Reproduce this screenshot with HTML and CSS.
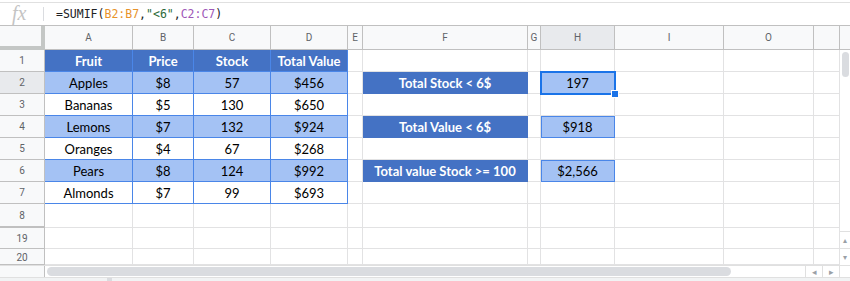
FILE: index.html
```html
<!DOCTYPE html>
<html lang="en">
<head>
    <meta charset="UTF-8">
    <title>SUMIF - Sheet</title>
    <link rel="stylesheet" href="styles.css">
</head>
<body>
    <!-- Formula bar -->
    <div class="formula-bar">
        <span class="fx">fx</span>
        <span class="formula">=SUMIF(<span class="ref-b">B2:B7</span>,<span class="str">"&lt;6"</span>,<span class="ref-c">C2:C7</span>)</span>
    </div>

    <div class="sheet">
        <div class="grid">
            <div class="row head-row">
                <div class="corner"></div>
                <div class="col-h">A</div>
                <div class="col-h">B</div>
                <div class="col-h">C</div>
                <div class="col-h">D</div>
                <div class="col-h">E</div>
                <div class="col-h">F</div>
                <div class="col-h">G</div>
                <div class="col-h active">H</div>
                <div class="col-h">I</div>
                <div class="col-h">O</div>
                <div class="col-h"></div>
            </div>
            <div class="row">
                <div class="row-h">1</div>
                <div class="cell t-head">Fruit</div>
                <div class="cell t-head">Price</div>
                <div class="cell t-head">Stock</div>
                <div class="cell t-head">Total Value</div>
                <div class="cell"></div><div class="cell"></div><div class="cell"></div><div class="cell"></div>
                <div class="cell"></div><div class="cell"></div><div class="cell"></div>
            </div>
            <div class="row">
                <div class="row-h active">2</div>
                <div class="cell t-cell alt">Apples</div>
                <div class="cell t-cell alt">$8</div>
                <div class="cell t-cell alt">57</div>
                <div class="cell t-cell alt">$456</div>
                <div class="cell"></div>
                <div class="cell label">Total Stock &lt; 6$</div>
                <div class="cell"></div>
                <div class="cell result selected">197</div>
                <div class="cell"></div><div class="cell"></div><div class="cell"></div>
            </div>
            <div class="row">
                <div class="row-h">3</div>
                <div class="cell t-cell">Bananas</div>
                <div class="cell t-cell">$5</div>
                <div class="cell t-cell">130</div>
                <div class="cell t-cell">$650</div>
                <div class="cell"></div><div class="cell"></div><div class="cell"></div><div class="cell"></div>
                <div class="cell"></div><div class="cell"></div><div class="cell"></div>
            </div>
            <div class="row">
                <div class="row-h">4</div>
                <div class="cell t-cell alt">Lemons</div>
                <div class="cell t-cell alt">$7</div>
                <div class="cell t-cell alt">132</div>
                <div class="cell t-cell alt">$924</div>
                <div class="cell"></div>
                <div class="cell label">Total Value &lt; 6$</div>
                <div class="cell"></div>
                <div class="cell result">$918</div>
                <div class="cell"></div><div class="cell"></div><div class="cell"></div>
            </div>
            <div class="row">
                <div class="row-h">5</div>
                <div class="cell t-cell">Oranges</div>
                <div class="cell t-cell">$4</div>
                <div class="cell t-cell">67</div>
                <div class="cell t-cell">$268</div>
                <div class="cell"></div><div class="cell"></div><div class="cell"></div><div class="cell"></div>
                <div class="cell"></div><div class="cell"></div><div class="cell"></div>
            </div>
            <div class="row">
                <div class="row-h">6</div>
                <div class="cell t-cell alt">Pears</div>
                <div class="cell t-cell alt">$8</div>
                <div class="cell t-cell alt">124</div>
                <div class="cell t-cell alt">$992</div>
                <div class="cell"></div>
                <div class="cell label">Total value Stock &gt;= 100</div>
                <div class="cell"></div>
                <div class="cell result">$2,566</div>
                <div class="cell"></div><div class="cell"></div><div class="cell"></div>
            </div>
            <div class="row">
                <div class="row-h">7</div>
                <div class="cell t-cell">Almonds</div>
                <div class="cell t-cell">$7</div>
                <div class="cell t-cell">99</div>
                <div class="cell t-cell">$693</div>
                <div class="cell"></div><div class="cell"></div><div class="cell"></div><div class="cell"></div>
                <div class="cell"></div><div class="cell"></div><div class="cell"></div>
            </div>
            <div class="row row-8">
                <div class="row-h">8</div>
                <div class="cell"></div><div class="cell"></div><div class="cell"></div><div class="cell"></div>
                <div class="cell"></div><div class="cell"></div><div class="cell"></div><div class="cell"></div>
                <div class="cell"></div><div class="cell"></div><div class="cell"></div>
            </div>
            <div class="row row-19">
                <div class="row-h">19</div>
                <div class="cell"></div><div class="cell"></div><div class="cell"></div><div class="cell"></div>
                <div class="cell"></div><div class="cell"></div><div class="cell"></div><div class="cell"></div>
                <div class="cell"></div><div class="cell"></div><div class="cell"></div>
            </div>
            <div class="row row-20">
                <div class="row-h">20</div>
                <div class="cell"></div><div class="cell"></div><div class="cell"></div><div class="cell"></div>
                <div class="cell"></div><div class="cell"></div><div class="cell"></div><div class="cell"></div>
                <div class="cell"></div><div class="cell"></div><div class="cell"></div>
            </div>
        </div>

        <!-- Vertical scrollbar -->
        <div class="vscroll">
            <div class="vscroll-head"></div>
            <div class="vscroll-track">
                <div class="vthumb"></div>
            </div>
            <div class="vscroll-btn">&#9652;</div>
            <div class="vscroll-btn">&#9662;</div>
        </div>
    </div>

    <!-- Horizontal scrollbar -->
    <div class="hscroll">
        <div class="hscroll-left"></div>
        <div class="hscroll-track">
            <div class="hthumb"></div>
        </div>
        <div class="hscroll-btn">&#9666;</div>
        <div class="hscroll-btn">&#9656;</div>
        <div class="hscroll-end"></div>
    </div>

    <div class="tabs-strip">
        <div class="tabs-mark"></div>
    </div>
</body>
</html>
```

FILE: styles.css
```css
body {
    margin: 0;
    width: 850px;
    height: 281px;
    overflow: hidden;
    background-color: #fff;
    font-family: Lato, "Liberation Sans", Arial, sans-serif;
}

/* Formula bar */
.formula-bar {
    display: flex;
    align-items: center;
    height: 22px;
    margin-top: 2px;
    border-top: 1px solid #e0e0e0;
    border-bottom: 1px solid #c0c0c0;
}

.fx {
    width: 44px;
    padding-left: 12px;
    box-sizing: border-box;
    border-right: 1px solid #dadce0;
    height: 14px;
    line-height: 13px;
    font-family: "Liberation Serif", serif;
    font-style: italic;
    font-size: 20px;
    color: #c4c4c4;
}

.formula {
    padding-left: 12px;
    font-family: "DejaVu Sans Mono", "Liberation Mono", monospace;
    font-size: 11.5px;
    color: #202124;
}

.ref-b { color: #e8932b; }
.str { color: #2b6a3a; }
.ref-c { color: #9e58b8; }

/* Grid */
.sheet {
    display: flex;
    height: 239px;
}

.grid {
    width: 840px;
}

.row {
    display: grid;
    grid-template-columns: 45px 88px 61px 77px 77px 15px 165px 13px 74px 109px 90px 26px;
    height: 22px;
}

.head-row { height: 24px; }
.row-8 { height: 24px; }
.row-19 { height: 21px; }
.row-20 { height: 16px; }

.corner {
    background-color: #f8f9fa;
    border-right: 4px solid #c4c7c5;
    border-bottom: 4px solid #c4c7c5;
}

.col-h,
.row-h {
    display: flex;
    align-items: center;
    justify-content: center;
    background-color: #f8f9fa;
    border-right: 1px solid #c0c0c0;
    border-bottom: 1px solid #c0c0c0;
    font-family: Roboto, "Liberation Sans", Arial, sans-serif;
    font-size: 10px;
    color: #5f6368;
}

.col-h.active,
.row-h.active {
    background-color: #e8eaed;
}

.row-8 .row-h {
    border-bottom: 2px solid #c0c0c0;
}

.row-20 .row-h {
    align-items: flex-end;
    padding-bottom: 1px;
}

.cell {
    display: flex;
    align-items: center;
    justify-content: center;
    padding-top: 1px;
    border-right: 1px solid #e2e2e3;
    border-bottom: 1px solid #e2e2e3;
    font-size: 13px;
    color: #000;
    white-space: nowrap;
}

.t-head {
    background-color: #4472c4;
    border-color: #4a86e8;
    color: #fff;
    font-weight: 700;
}

.t-cell {
    border-color: #4a86e8;
}

.alt {
    background-color: #a4c2f4;
}

.label {
    background-color: #4472c4;
    border-color: #4472c4;
    color: #fff;
    font-weight: 700;
}

.result {
    background-color: #a4c2f4;
    outline: 1px solid #4a86e8;
    outline-offset: -1px;
}

.result.selected {
    position: relative;
    z-index: 1;
    outline: 2px solid #1a73e8;
    outline-offset: -1px;
}

.result.selected::after {
    content: "";
    position: absolute;
    right: -5px;
    bottom: -5px;
    width: 6px;
    height: 6px;
    background-color: #1a73e8;
    border: 1px solid #fff;
}

/* Vertical scrollbar */
.vscroll {
    display: flex;
    flex-direction: column;
    width: 10px;
}

.vscroll-head {
    height: 23px;
    background-color: #f8f9fa;
    border-bottom: 1px solid #c0c0c0;
}

.vscroll-track {
    flex: 1;
    padding: 2px 1px 0 2px;
}

.vthumb {
    height: 25px;
    border-radius: 4px;
    background-color: #dadce0;
}

.vscroll-btn {
    display: flex;
    align-items: center;
    justify-content: center;
    height: 16px;
    border-top: 1px solid #e0e0e0;
    font-size: 8px;
    color: #9aa0a6;
}

/* Horizontal scrollbar */
.hscroll {
    display: flex;
    height: 12px;
    border-top: 1px solid #e0e0e0;
    box-sizing: border-box;
}

.hscroll-left {
    width: 45px;
    background-color: #f8f9fa;
    border-right: 1px solid #c0c0c0;
    box-sizing: border-box;
}

.hscroll-track {
    flex: 1;
    padding: 1px 74px 0 2px;
}

.hthumb {
    height: 9px;
    border-radius: 5px;
    background-color: #dadce0;
}

.hscroll-btn {
    display: flex;
    align-items: center;
    justify-content: center;
    width: 16px;
    border-left: 1px solid #e0e0e0;
    font-size: 9px;
    color: #9aa0a6;
}

.hscroll-end {
    width: 10px;
    border-left: 1px solid #e0e0e0;
}

.tabs-strip {
    height: 4px;
    background-color: #f1f3f4;
    border-top: 1px solid #e0e0e0;
}

.tabs-mark {
    width: 5px;
    height: 4px;
    margin-left: 107px;
    background-color: #dadce0;
}
```
